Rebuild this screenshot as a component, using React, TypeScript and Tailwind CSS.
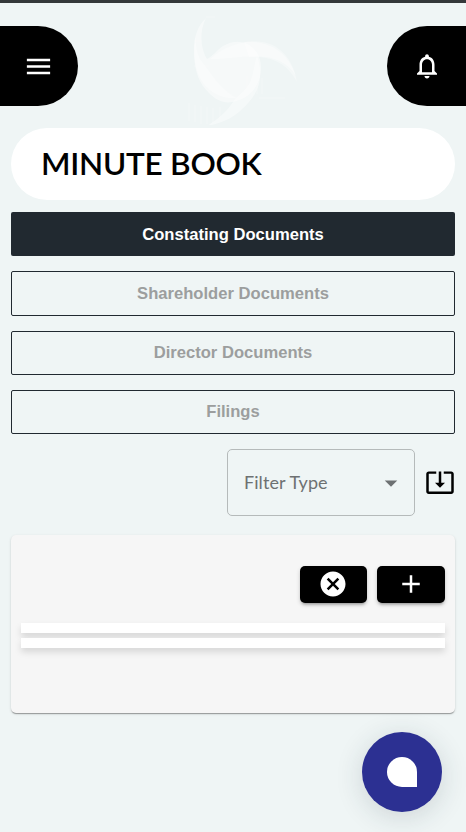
const tabs = [
  { label: 'Shareholder Documents', size: 'h-[45px] pt-px' },
  { label: 'Director Documents', size: 'h-11' },
  { label: 'Filings', size: 'h-11' },
];

function Icon({ d, className }: { d: string; className: string }) {
  return (
    <svg viewBox="0 0 24 24" fill="currentColor" className={className}>
      <path d={d} />
    </svg>
  );
}

function Swirl() {
  return (
    <svg viewBox="0 0 120 112" fill="none" className="absolute left-[184px] top-[13px] h-[112px] w-[120px]">
      <path d="M22 5C13 13 9 26 10 42c1 18 5 28 15 38 9 9 18 12 30 7 14-5 22-18 22-32 0-8-2-14-8-20-8-8-20-8-30-2-6 4-10 10-16 13-5-8-9-25-1-41z" fill="#fff" fillOpacity=".42" />
      <path d="M20 7C10 18 10 32 16 46l9 12c6 8 14 20 28 27-14 2-28-5-36-18C8 52 7 22 20 7z" fill="#fff" fillOpacity=".3" />
      <path d="M26 46c14-13 35-20 53-17 18 3 31 19 34 40-8-15-20-24-39-25-20-1-34 3-48 2z" fill="#fff" fillOpacity=".3" />
      <path d="M60 29c22-2 43 7 52 34-10-16-27-21-47-19z" fill="#fff" fillOpacity=".35" />
      <path d="M73 43c6 17 4 33-8 46-9 10-19 20-42 24 13-8 22-17 28-27 5-5 12-9 16-19 3-8 3-16 6-24z" fill="#fff" fillOpacity=".4" />
      <g stroke="#fff" strokeOpacity=".4" strokeWidth=".7">
        <path d="M5 90v18M11 92v17M17 93v18M23 94v17M29 95v15M36 94v14M63 63v20M68 63v20M73 65v16M78 65v16M75 85h26" />
        <path d="M16 113h34M22 4h9M10 28h8M10 53h15" />
      </g>
    </svg>
  );
}

export default function App() {
  return (
    <div className="relative flex h-[832px] w-full flex-col overflow-hidden bg-[#eff5f5] font-['Liberation_Sans',sans-serif]">
      <div className="h-[3px] shrink-0 bg-[#34383a]" />
      <Swirl />
      <header className="mt-[23px] flex h-20 shrink-0 justify-between text-white">
        <button className="flex w-[78px] items-center justify-center rounded-r-[40px] bg-black pr-0.5">
          <Icon className="size-[31px]" d="M3 18h18v-2H3zm0-5h18v-2H3zm0-7v2h18V6z" />
        </button>
        <button className="flex w-[79px] items-center justify-center rounded-l-[40px] bg-black">
          <Icon className="size-[30px]" d="M12 22c1.1 0 2-.9 2-2h-4c0 1.1.9 2 2 2m6-6v-5c0-3.07-1.63-5.64-4.5-6.32V4c0-.83-.67-1.5-1.5-1.5s-1.5.67-1.5 1.5v.68C7.64 5.36 6 7.92 6 11v5l-2 2v1h16v-1zm-2 1H8v-6c0-2.48 1.51-4.5 4-4.5s4 2.02 4 4.5z" />
        </button>
      </header>
      <main className="relative flex flex-col px-[11px] pt-[22px]">
        <h1 className="flex h-[72px] items-center rounded-full bg-white pl-[30px] font-['Lato',sans-serif] text-[31.5px] font-semibold tracking-[-0.25px] text-black">
          MINUTE BOOK
        </h1>
        <nav className="mt-3 flex flex-col gap-[15px] text-[16.6px] font-bold">
          <button className="h-11 rounded-[2px] bg-[#212930] pt-0.5 text-white">Constating Documents</button>
          {tabs.map(({ label, size }) => (
            <button key={label} className={`${size} rounded-[2px] border border-[#212930] text-[#9c9e9e]`}>
              {label}
            </button>
          ))}
        </nav>
        <div className="mt-[15px] flex h-[67px] items-center justify-end gap-[10px]">
          <button className="flex h-full w-[188px] items-center justify-between rounded-[5px] border border-[#b5baba] pl-4 pr-2 font-['Lato',sans-serif] text-[18px] tracking-[0.08px] text-[#6d7172]">
            <span>Filter Type</span>
            <Icon className="size-[30px]" d="m7 10 5 5 5-5z" />
          </button>
          <Icon className="size-[30px] -translate-y-px" d="m12 16.5 4-4h-3v-9h-2v9H8zm9-13h-6v1.99h6v14.03H3V5.49h6V3.5H3c-1.1 0-2 .9-2 2v14c0 1.1.9 2 2 2h18c1.1 0 2-.9 2-2v-14c0-1.1-.9-2-2-2" />
        </div>
        <section className="mt-[19px] h-[178px] rounded-[5px] bg-[#f6f6f6] px-[10px] pt-[31px] shadow-[0_2px_1px_-1px_rgba(0,0,0,0.2),0_1px_1px_0_rgba(0,0,0,0.14),0_1px_3px_0_rgba(0,0,0,0.12)]">
          <div className="flex justify-end gap-[10px] text-white">
            <button className="flex h-[37px] w-[67px] items-center justify-center rounded-[5px] bg-black pb-px pr-px shadow-[0_3px_3px_-2px_rgba(0,0,0,0.3),0_2px_4px_rgba(0,0,0,0.18)]">
              <Icon className="size-[30px]" d="M12 2C6.47 2 2 6.47 2 12s4.47 10 10 10 10-4.47 10-10S17.53 2 12 2m5 13.59L15.59 17 12 13.41 8.41 17 7 15.59 10.59 12 7 8.41 8.41 7 12 10.59 15.59 7 17 8.41 13.41 12z" />
            </button>
            <button className="flex h-[37px] w-[68px] items-center justify-center rounded-[5px] bg-black pb-px shadow-[0_3px_3px_-2px_rgba(0,0,0,0.3),0_2px_4px_rgba(0,0,0,0.18)]">
              <Icon className="size-[30px]" d="M19 13h-6v6h-2v-6H5v-2h6V5h2v6h6z" />
            </button>
          </div>
          <div className="mt-5 flex flex-col gap-[5px]">
            <div className="h-[10px] bg-white shadow-[0_4px_7px_rgba(0,0,0,0.13)]" />
            <div className="h-[10px] bg-white shadow-[0_4px_7px_rgba(0,0,0,0.13)]" />
          </div>
        </section>
      </main>
      <button className="absolute bottom-5 right-6 flex size-20 items-center justify-center rounded-full bg-[#2c3092] shadow-[0_5px_28px_rgba(30,50,60,0.16)]">
        <span className="size-[30px] rounded-full rounded-br-[1px] bg-white" />
      </button>
    </div>
  );
}
